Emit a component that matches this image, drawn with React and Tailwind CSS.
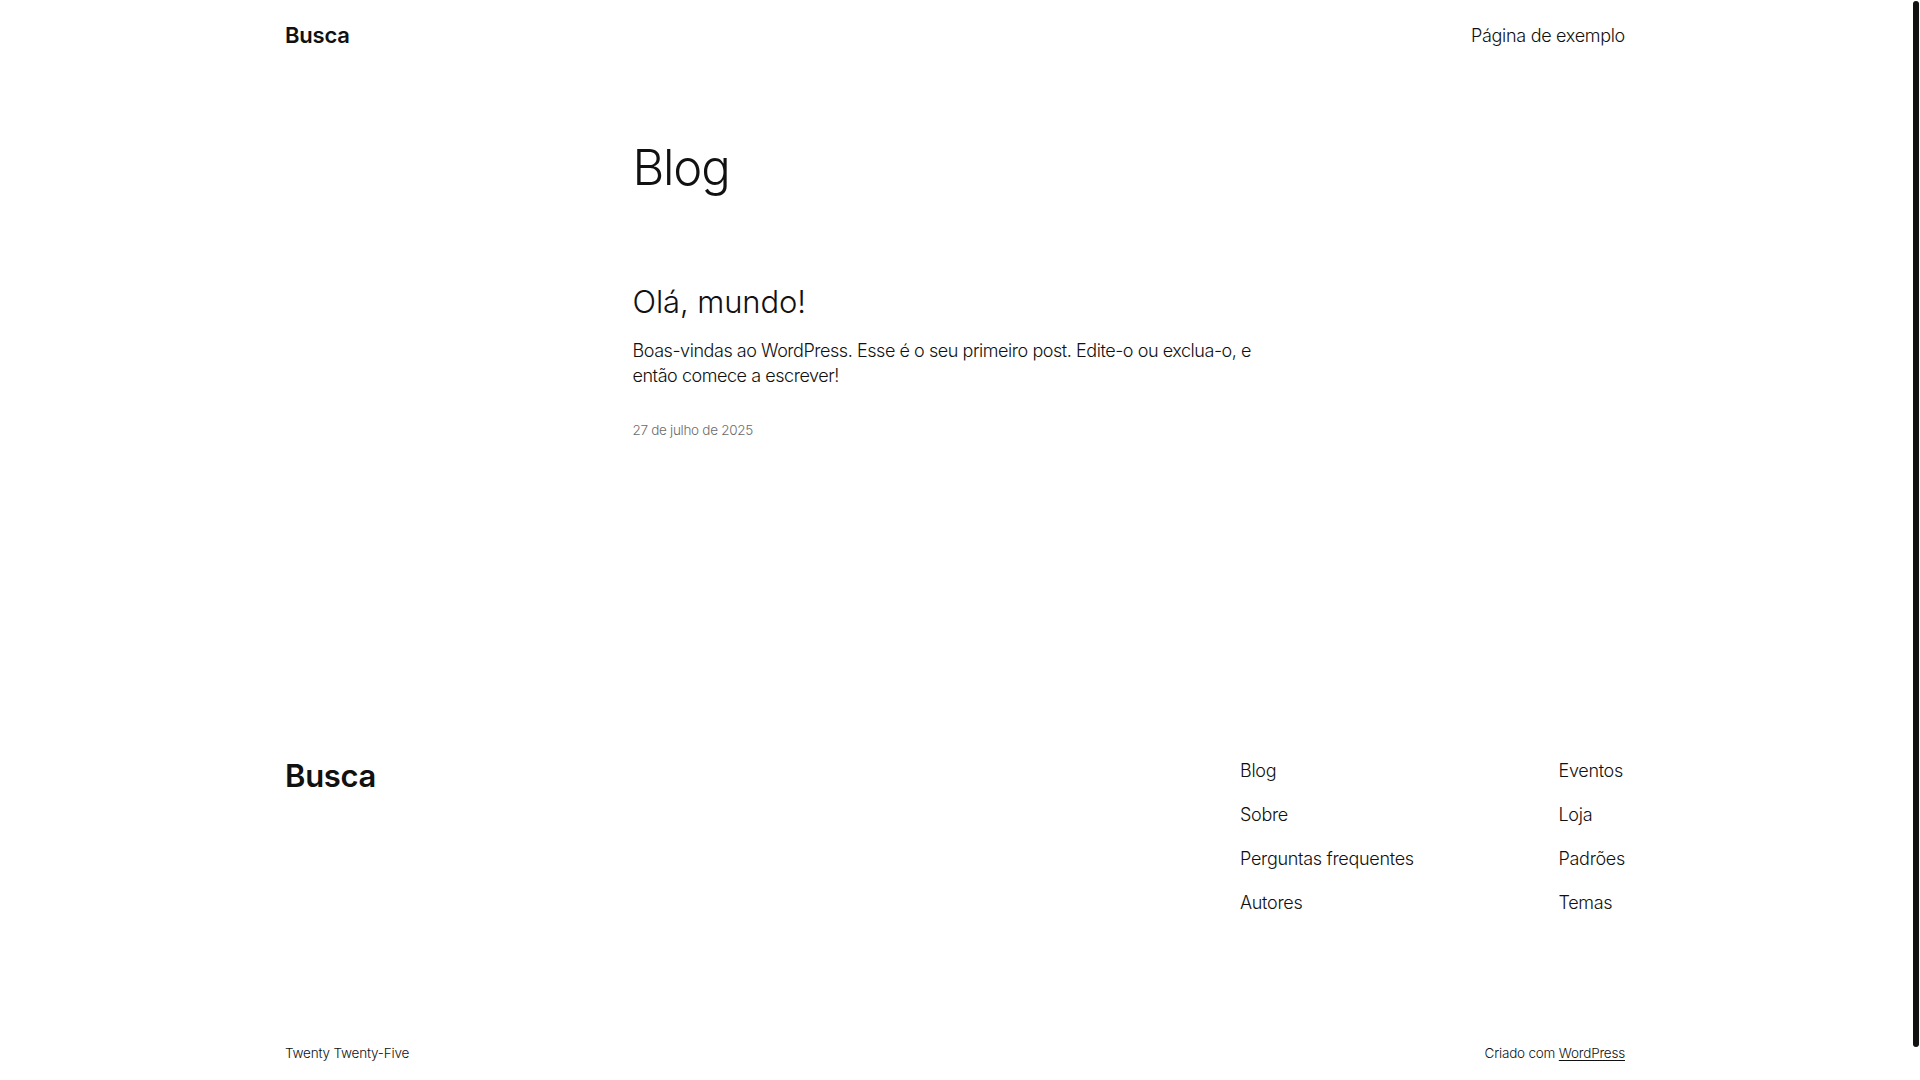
import React from 'react';

const navLeft = ['Blog', 'Sobre', 'Perguntas frequentes', 'Autores'];
const navRight = ['Eventos', 'Loja', 'Padrões', 'Temas'];

const App = () => {
  return (
    <div className="relative h-[1080px] overflow-hidden bg-white text-[#111111] font-['Inter','Liberation_Sans',sans-serif]">
      <div className="w-[1910px]">
        {/* header */}
        <header className="w-[1340px] mx-auto h-[70px] flex items-center justify-between">
          <span className="text-[22px] leading-[28px] font-semibold tracking-[-0.2px]">Busca</span>
          <span className="text-[18px] leading-[25px] font-light tracking-[-0.3px]">Página de exemplo</span>
        </header>

        {/* main */}
        <main className="w-[645px] mx-auto">
          <h1 className="mt-[68px] text-[49px] leading-[60px] font-light tracking-[-1.2px]">Blog</h1>
          <h2 className="mt-[86px] text-[31px] leading-[36px] font-light tracking-[-0.1px]">Olá, mundo!</h2>
          <p className="mt-[18px] text-[18px] leading-[25px] font-light tracking-[-0.45px]">
            Boas-vindas ao WordPress. Esse é o seu primeiro post. Edite-o ou exclua-o, e então comece a escrever!
          </p>
          <p className="mt-[32px] text-[13.5px] leading-[20px] font-light text-[#6b6b6b] tracking-[-0.3px]">27 de julho de 2025</p>
        </main>

        {/* footer */}
        <footer className="w-[1340px] mx-auto mt-[318px]">
          <div className="flex justify-between items-start">
            <span className="mt-[1px] text-[31px] leading-[34px] font-semibold tracking-[-0.3px]">Busca</span>
            <nav className="w-[385px] flex">
              <ul className="w-[319px] flex flex-col gap-[19px]">
                {navLeft.map((item) => (
                  <li key={item} className="text-[18px] leading-[25px] font-light tracking-[-0.3px]">{item}</li>
                ))}
              </ul>
              <ul className="flex-1 flex flex-col gap-[19px]">
                {navRight.map((item) => (
                  <li key={item} className="text-[18px] leading-[25px] font-light tracking-[-0.3px] whitespace-nowrap">{item}</li>
                ))}
              </ul>
            </nav>
          </div>
          <div className="mt-[128px] flex justify-between items-center text-[13.5px] leading-[20px] font-light tracking-[-0.2px]">
            <span>Twenty Twenty-Five</span>
            <span>
              Criado com <span className="underline underline-offset-2">WordPress</span>
            </span>
          </div>
        </footer>
      </div>

      {/* scrollbar */}
      <div className="absolute top-0 right-0 w-[10px] h-full bg-white">
        <div className="ml-[3px] mt-[1px] w-[6px] h-[1046px] rounded-full bg-[#111111]" />
      </div>
    </div>
  );
};

export default App;
